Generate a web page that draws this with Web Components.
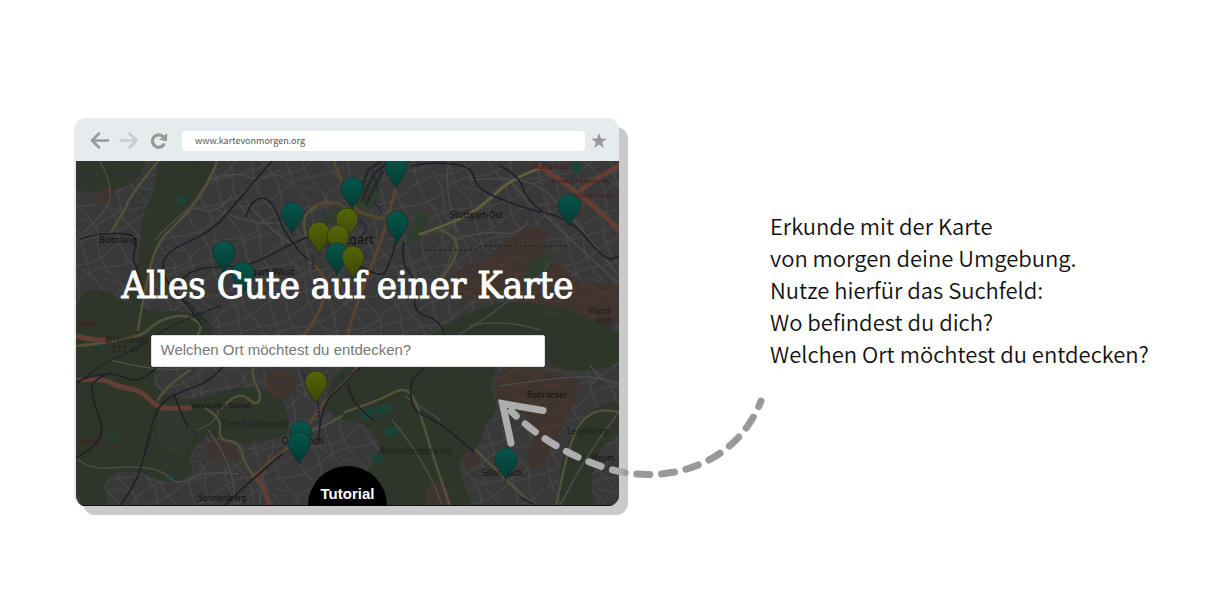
<!DOCTYPE html>
<html lang="de">
<head>
<meta charset="utf-8">
<meta name="viewport" content="width=device-width, initial-scale=1">
<title>Karte von morgen</title>
<style>
body{margin:0;background:#fff;color:#111;font-family:"Noto Sans CJK SC","Noto Sans",sans-serif}
</style>
</head>
<body>
<tutorial-slide>
  <browser-window slot="window" address="www.kartevonmorgen.org">
    <city-map>
      <map-search>Alles Gute auf einer Karte</map-search>
    </city-map>
  </browser-window>
  <curved-arrow slot="pointer"></curved-arrow>
  <slide-caption slot="caption">Erkunde mit der Karte<br>von morgen deine Umgebung.<br>Nutze hierfür das Suchfeld:<br>Wo befindest du dich?<br>Welchen Ort möchtest du entdecken?</slide-caption>
</tutorial-slide>

<template id="t-slide">
<style>
:host{display:block}
main{display:grid;grid-template-columns:minmax(0,545fr) minmax(0,377fr);column-gap:150px;align-items:center;padding:118px 65px 80px 74px}
.figure{position:relative}
</style>
<main>
  <div class="figure"><slot name="window"></slot><slot name="pointer"></slot></div>
  <slot name="caption"></slot>
</main>
</template>

<template id="t-caption">
<style>
:host{display:block;padding:0 0 46px 1px}
p{margin:0;font-size:22px;line-height:32px;font-weight:350;white-space:nowrap}
</style>
<p><slot></slot></p>
</template>

<template id="t-window">
<style>
:host{display:block;border-radius:12px;background:#e6ebee;box-shadow:9px 9px 0 #cbc9ca}
header{display:flex;align-items:center;height:43px;padding:2px 10px 0 16px;box-sizing:border-box}
button{display:block;border:0;padding:0;background:none;width:20px;height:20px;margin-right:9px;color:#999}
button.next{color:#c9cbcc}
button.reload{margin-right:14px}
button.star{margin:0 0 0 4px}
svg{display:block;width:20px;height:20px}
input{flex:1;min-width:0;height:20px;box-sizing:border-box;border:0;border-radius:4px;background:#fff;padding:0 13px;font:9px "Noto Sans CJK SC","Noto Sans",sans-serif;color:#555;outline:0}
.view{border-left:2px solid #e6ebee;border-radius:0 0 11px 11px;overflow:hidden}
</style>
<header>
  <button type="button" aria-label="Zurück"><svg viewBox="0 0 20 20" fill="none" stroke="currentColor" stroke-width="2.600" stroke-linecap="round" stroke-linejoin="round"><path d="M18 9.500H2.500M9 2.500L2 9.500L9 16.500"/></svg></button>
  <button type="button" class="next" aria-label="Vor"><svg viewBox="0 0 20 20" fill="none" stroke="currentColor" stroke-width="2.600" stroke-linecap="round" stroke-linejoin="round"><path d="M1.500 9.500H17M10.500 2.500L17.500 9.500L10.500 16.500"/></svg></button>
  <button type="button" class="reload" aria-label="Neu laden"><svg viewBox="0 0 20 20"><path d="M15.700 13.700A6.200 6.200 0 1 1 14.500 5.200" fill="none" stroke="currentColor" stroke-width="3.200" stroke-linecap="round"/><path d="M10.800 8.800L19 10.200L19.200 2.400L16.800 3.700L14.600 6.600Z" fill="currentColor"/></svg></button>
  <input type="text" aria-label="Adresse">
  <button type="button" class="star" aria-label="Lesezeichen"><svg viewBox="0 0 20 20"><path fill="currentColor" d="M10 2L12 7.500L17.700 7.700L13.200 11.200L14.800 17L10 13.600L5.200 17L6.800 11.200L2.300 7.700L8 7.500Z"/></svg></button>
</header>
<div class="view"><slot></slot></div>
</template>

<template id="t-search">
<style>
:host{display:flex;flex-direction:column;align-items:center;flex:1;padding-top:98px}
h1{margin:0;font:38px/52px "DejaVu Serif Condensed","DejaVu Serif",serif;color:#fff;-webkit-text-stroke:1px #fff;white-space:nowrap}
input{width:394px;max-width:90%;height:32px;box-sizing:border-box;margin:24px 0 0;padding:0 9px 3px;border:1px solid #ddd;border-radius:2px;background:#fff;font:15px "Liberation Sans",Arial,sans-serif;color:#333;outline:0}
input::placeholder{color:#777;opacity:1}
button{display:block;width:79px;height:40px;margin-top:auto;border:0;border-radius:40px 40px 0 0;background:#000;color:#fff;padding:15px 0 0;font:bold 15px/20px "Liberation Sans",Arial,sans-serif}
</style>
<h1><slot></slot></h1>
<input type="text" aria-label="Ort" placeholder="Welchen Ort möchtest du entdecken?">
<button type="button">Tutorial</button>
</template>

<template id="t-arrow">
<style>
:host{position:absolute;right:-149px;top:276px;width:274px;height:86px;pointer-events:none}
svg{display:block;width:274px;height:86px}
</style>
<svg viewBox="494 394 274 86" fill="none" stroke="url(#g)" stroke-width="7" stroke-linecap="round" aria-hidden="true">
  <defs><linearGradient id="g" gradientUnits="userSpaceOnUse" x1="494" y1="0" x2="768" y2="0"><stop offset=".46" stop-color="#adadad"/><stop offset=".485" stop-color="#999"/></linearGradient></defs>
  <path d="M761 401C735 468 660 488 600 466C560 452 530 430 511 411" stroke-dasharray="13 11.8" stroke-dashoffset="7"/>
  <path d="M543 410.500L502.500 403.500L511 443" stroke-width="7"/>
</svg>
</template>

<template id="t-map">
<style>
:host{display:flex;position:relative;aspect-ratio:543/345;background:#3a3939;overflow:hidden}
svg{position:absolute;inset:0;width:100%;height:100%}
.content{position:relative;display:flex;flex:1;min-width:0}
text{font-family:"DejaVu Sans",sans-serif;font-size:9px;fill:#111}
</style>
<svg viewBox="76 161 543 345" preserveAspectRatio="xMidYMid slice" fill="none" stroke-linecap="round" stroke-linejoin="round" role="img" aria-label="Stadtplan von Stuttgart">
  <defs>
    <pattern id="st" width="74" height="66" patternUnits="userSpaceOnUse" patternTransform="rotate(-24)">
      <path d="M0 9Q20 3 38 10T74 9M0 27Q18 31 35 24T74 27M0 46Q22 41 42 49T74 46M0 58L20 61L47 55L74 58M12 0Q8 18 14 33T12 66M29 0Q34 18 27 36T29 66M48 0L45 25L52 46L48 66M63 0Q58 20 66 36T63 66M36 10L45 25M14 33L24 44M52 30L65 40" stroke="#4a4948" stroke-width="1"/>
    </pattern>
    <pattern id="wood" width="90" height="70" patternUnits="userSpaceOnUse" patternTransform="rotate(18)">
      <path d="M0 18Q25 4 46 20T90 18M14 0Q24 26 14 44T14 70M60 0Q52 24 66 42T60 70M0 52Q30 62 52 48T90 52" stroke="#28301f" stroke-width="1" stroke-dasharray="2 3"/>
    </pattern>
    <pattern id="hill" width="34" height="28" patternUnits="userSpaceOnUse">
      <path d="M0 8Q10 1 18 9T34 8M0 20Q12 26 20 17T34 20" stroke="#4d3b32" stroke-width="1"/>
    </pattern>
    <linearGradient id="teal" x2="0" y2="1"><stop stop-color="#07564b"/><stop offset="1" stop-color="#033a33"/></linearGradient>
    <linearGradient id="lime" x2="0" y2="1"><stop stop-color="#566608"/><stop offset="1" stop-color="#3b4704"/></linearGradient>
    <path id="pin" stroke="#142b25" stroke-width=".6" d="M0 1C-3-6-11-12-11-20A11 11 0 0 1 11-20C11-12 3-6 0 1Z"/>
  </defs>

  <path fill="#3a3939" d="M76 161H619V506H76Z"/>
  <path fill="url(#st)" d="M76 161H619V506H76Z"/>

  <g class="smooth" fill="#2e362a">
    <path d="M70 155L148 155L142 178L116 191L70 193Z"/>
    <path d="M158 155L220 155L205 185L180 216L160 240L150 272L142 310L126 300L140 258L141 215L155 193Z"/>
    <path d="M70 304L96 285L125 302L150 312L190 310L218 326L205 340L170 352L148 382L170 398L198 400L240 385L272 390L290 410L284 438L238 446L210 430L186 456L196 474L170 485L130 468L100 480L112 510L70 510Z"/>
    <path d="M344 362L420 345L452 320L480 308L508 300L560 305L625 330L625 366L560 374L540 350L500 360L488 384L500 410L484 425L478 452L456 458L466 490L476 512L352 512L364 470L384 452L370 424L330 418L324 396Z"/>
    <path d="M556 512L562 450L584 414L612 400L625 404L625 430L600 446L590 480L596 512Z"/>
    <path d="M210 407L246 390L280 398L292 424L282 440L226 442L204 432Z"/>
  </g>
  <g class="smooth" fill="url(#wood)">
    <path d="M70 155L220 155L180 216L142 310L126 300L141 215L116 191L70 193Z"/>
    <path d="M70 304L126 290L218 326L148 382L290 410L238 446L170 485L70 510Z"/>
    <path d="M344 362L452 320L508 300L625 330L625 366L500 360L488 384L478 452L466 512L352 512L384 452L324 396Z"/>
    <path d="M556 512L584 414L625 404L596 512Z"/>
  </g>
  <path fill="#32382f" d="M158 404L184 408L194 438L180 455L158 445Z"/>
  <g class="smooth" fill="#3f352e">
    <path d="M448 288L458 268L484 260L505 243L530 224L550 232L540 250L558 262L580 288L625 280L625 326L588 320L562 306L530 304L500 292L470 304Z"/>
    <path d="M492 378L522 360L556 376L583 375L572 410L556 440L540 470L524 466L536 430L520 410L496 404Z"/>
    <path d="M202 444L226 438L240 452L230 464L208 458Z"/>
    <path d="M424 486L446 480L454 510L426 510Z"/>
    <path d="M461 454L478 448L482 464L466 470Z"/>
    <path d="M97 191L117 186L109 205L93 205Z"/>
    <path d="M264 374L284 366L300 380L290 398L270 400Z"/>
  </g>
  <g class="smooth" fill="url(#hill)">
    <path d="M448 288L530 224L580 288L625 280L625 326L470 304Z"/>
    <path d="M492 378L522 360L583 375L540 470L520 410Z"/>
  </g>
  <path fill="#2e3d2e" d="M530 262L556 250L550 268L530 290L520 292ZM418 210L430 214L420 240L405 246ZM366 180L382 176L376 205L356 220L350 208ZM322 215L336 208L342 218L326 225Z"/>
  <path fill="#1d4238" d="M176 198L184 194L187 202L180 206ZM374 408L386 402L392 410L380 418ZM382 430L398 424L402 430L390 438ZM370 454L380 453L384 461L374 464ZM164 476L172 472L175 479L168 482ZM110 434L116 436L114 441L109 440ZM96 340L105 340L102 347H97ZM570 166L576 161L582 168L577 174ZM360 414L372 406L374 416L364 420Z"/>

  <g class="smooth" stroke="#4e4d4b" stroke-width="1.300">
    <path d="M100 161L112 184L108 210L84 232"/><path d="M155 240L172 222L192 205L215 215L232 196"/><path d="M210 180L236 171L258 182L280 170"/>
    <path d="M246 200L262 225L300 250"/><path d="M230 215L270 230L296 218"/><path d="M448 165L446 195L458 225L452 262L430 290"/>
    <path d="M470 180L520 175L560 200L619 276"/><path d="M508 180L590 258L619 284"/><path d="M456 240L484 230L518 236L528 222"/>
    <path d="M550 262L536 285L508 300L490 316L446 342L444 352"/><path d="M76 458L90 470L130 466L162 470L178 486L208 470L238 474"/>
    <path d="M208 430L238 470L234 506"/><path d="M270 455L260 480L260 506"/><path d="M198 430L220 420L218 410"/>
    <path d="M405 396L440 420"/><path d="M392 420L430 466L442 506"/><path d="M500 386L566 376L604 378L619 384"/>
    <path d="M590 366L604 380L590 384"/><path d="M560 506L582 460L619 412"/><path d="M110 360L160 372L200 366L246 350"/><path d="M540 330L500 318L470 326"/>
  </g>
  <g class="smooth" stroke="#53513a" stroke-width="2.500">
    <path d="M217 161L210 182L182 220L158 240L146 282L138 330"/><path d="M158 161L130 196L124 212L110 234"/>
    <path d="M76 346L138 340L158 320L186 314L204 326L198 334"/><path d="M328 201L310 208L302 222L306 236"/>
    <path d="M420 234L456 222L484 205L512 178L541 168" stroke="#62603c"/><path d="M440 230L458 236L456 262L438 282"/>
    <path d="M205 408L222 418L218 440L240 442L244 464L258 482"/><path d="M222 408L238 390L256 406L262 396L250 374L254 340"/>
    <path d="M345 412L380 400L397 390L410 390L420 412L434 460L450 506"/><path d="M556 506L566 456L580 420L602 408L619 412"/>
    <path d="M190 370L166 386L158 400"/><path d="M476 450L498 472L524 496L534 506"/><path d="M285 440L320 430L342 416"/>
  </g>
  <g class="smooth" stroke="#57452f" stroke-width="3">
    <path d="M334 161L346 194L360 216L397 222"/><path d="M402 161L390 212L376 256L350 320L342 360"/>
    <path d="M256 474L276 456L302 438L322 402L350 380L360 362"/><path d="M316 205L336 200L346 210L390 220"/><path d="M310 262L330 276L318 320L292 350"/>
  </g>
  <g class="smooth" stroke="#633e34" stroke-width="5">
    <path d="M76 336L90 340L105 340"/><path d="M76 380L103 378L118 387L140 390L156 406L168 409L190 408"/>
    <path d="M270 506L264 488L256 474"/><path d="M540 166L590 200L619 230"/><path d="M619 166L600 176L580 190"/>
  </g>
  <g class="smooth" stroke="#20202a" stroke-width="1.700">
    <path d="M80 239L95 234L128 233L138 240L132 258L138 270L142 290"/><path d="M272 161L240 198L212 232L164 252L162 278L192 310L202 325"/>
    <path d="M246 217L250 204L262 196L274 204L286 238L308 260"/><path d="M174 292L184 270L228 266L250 266L306 236L330 230"/>
    <path d="M412 166L424 162L472 165L476 190L530 210L560 216L580 230L600 254L612 261L619 256"/><path d="M500 166L520 176L526 200L542 211"/>
    <path d="M396 242L390 264L380 280L350 260"/><path d="M404 242L400 262L418 282L412 312L440 320L448 345L422 370L410 380L412 412L438 420L474 452"/>
    <path d="M76 382L96 374L118 374L140 384L158 366"/><path d="M110 373L90 380L94 404L104 430L96 446L76 458"/>
    <path d="M120 506L136 484L146 450L156 408L174 394L210 382L224 366"/><path d="M174 394L180 412L188 427"/>
    <path d="M224 506L240 490L282 454"/><path d="M318 440L322 402L346 384L358 366L380 361"/><path d="M348 384L350 404L374 420"/><path d="M522 498L530 502L536 506"/>
  </g>
  <g class="smooth" stroke="#25262a" stroke-width="2" stroke-dasharray="5 3">
    <path d="M76 385L100 364L136 350L170 325L220 306"/><path d="M206 322L190 304L180 296"/>
  </g>
  <path d="M420 250H480M480 246H570" stroke="#2a2a2a" stroke-dasharray="1 4" stroke-width="2"/>
  <path d="M358 198L368 170L380 162M362 200L374 174L386 164M366 204L382 172" stroke="#29282c" stroke-width="3"/>
  <g stroke="#242343" stroke-width="2" stroke-dasharray="1 3"><path d="M360 220L367 228L362 236M373 170L378 190M374 202L382 212M312 256L314 268M302 372L318 400L320 430"/></g>

  <g>
    <text x="99" y="243">Botnang</text>
    <text x="244" y="275">ttgart-West</text>
    <text x="320" y="244" style="font-size:12px">Stuttgart</text>
    <text x="450" y="218" style="font-size:8px">Stuttgart-Ost</text>
    <text x="588" y="314" style="font-size:8px;fill:#211a18">Wand</text>
    <text x="597" y="324" style="font-size:8px;fill:#211a18">Höh</text>
    <text x="105" y="343" style="font-size:8px;fill:#2a1c18">Birkenkopf</text>
    <text x="112" y="352" style="font-size:8px;fill:#2a1c18">511 m</text>
    <text x="191" y="408" style="font-size:7px">Heslacher Tunnel</text>
    <text x="222" y="427" style="font-size:8px;font-style:italic;fill:#1b211a">Dornhaldenwald</text>
    <text x="282" y="444" style="font-size:8px">Degerloch</text>
    <text x="198" y="501" style="font-size:8px">Sonnenberg</text>
    <text x="379" y="454" style="font-size:8px;font-style:italic;fill:#1b211a">Armenkastenwald</text>
    <text x="527" y="398" style="font-size:8px">Rohracker</text>
    <text x="481" y="476" style="font-size:8px">Sillenbuch</text>
    <text x="567" y="434" style="font-size:8px;fill:#1b211a">Lederberg</text>
    <text x="591" y="461" style="font-size:8px">Heum</text>
    <text x="531" y="169" style="font-size:7px;fill:#4c1719">Stuttgarter</text>
    <text x="551" y="183" style="font-size:6px;fill:#4c1719">Dreieck Neckarpark</text>
    <text x="574" y="198" style="font-size:7px;fill:#4c1719">Viehsmann</text>
    <text x="77" y="326" style="font-size:7px;fill:#4c1719">dpark</text>
    <text x="77" y="444" style="font-size:7px;fill:#4c1719">mühle</text>
  </g>

  <g fill="url(#teal)">
    <use href="#pin" x="396" y="187"/><use href="#pin" x="352" y="208"/><use href="#pin" x="292" y="233"/>
    <use href="#pin" x="397" y="242"/><use href="#pin" x="569" y="225"/><use href="#pin" x="224" y="272"/>
    <use href="#pin" x="243" y="293"/><use href="#pin" x="301" y="452"/><use href="#pin" x="299" y="463"/><use href="#pin" x="506" y="479"/>
  </g>
  <g fill="url(#lime)"><use href="#pin" x="347" y="239"/><use href="#pin" x="319" y="253"/><use href="#pin" x="338" y="256"/></g>
  <use href="#pin" x="337" y="274" fill="url(#teal)"/>
  <g fill="url(#lime)"><use href="#pin" x="353" y="277"/><use href="#pin" x="316" y="402"/></g>
  <path d="M76 505.500H619" stroke="#111"/>
</svg>
<div class="content"><slot></slot></div>
</template>

<script>
class TemplateElement extends HTMLElement {
  constructor() {
    super();
    const template = document.getElementById(this.constructor.template);
    this.attachShadow({ mode: 'open' }).append(template.content.cloneNode(true));
  }
}

// Turns a polyline of map points into a curve through the middles of its segments.
function smoothPath(d) {
  const closed = d.endsWith('Z');
  const n = d.match(/[\d.]+/g).map(Number);
  const p = [];
  for (let i = 0; i < n.length; i += 2) p.push([n[i], n[i + 1]]);
  const mid = (a, b) => [(a[0] + b[0]) / 2, (a[1] + b[1]) / 2];
  if (closed) {
    let out = 'M' + mid(p[p.length - 1], p[0]);
    p.forEach((q, i) => { out += 'Q' + q + ' ' + mid(q, p[(i + 1) % p.length]); });
    return out + 'Z';
  }
  let out = 'M' + p[0];
  for (let i = 1; i < p.length - 1; i++) {
    out += 'Q' + p[i] + ' ' + (i === p.length - 2 ? p[i + 1] : mid(p[i], p[i + 1]));
  }
  return p.length > 2 ? out : d;
}

customElements.define('tutorial-slide', class extends TemplateElement { static template = 't-slide'; });
customElements.define('slide-caption', class extends TemplateElement { static template = 't-caption'; });
customElements.define('browser-window', class extends TemplateElement {
  static template = 't-window';
  connectedCallback() {
    this.shadowRoot.querySelector('input').value = this.getAttribute('address') || '';
  }
});
customElements.define('city-map', class extends TemplateElement {
  static template = 't-map';
  constructor() {
    super();
    for (const path of this.shadowRoot.querySelectorAll('.smooth path')) {
      path.setAttribute('d', smoothPath(path.getAttribute('d')));
    }
  }
});
customElements.define('map-search', class extends TemplateElement { static template = 't-search'; });
customElements.define('curved-arrow', class extends TemplateElement { static template = 't-arrow'; });
</script>
</body>
</html>
